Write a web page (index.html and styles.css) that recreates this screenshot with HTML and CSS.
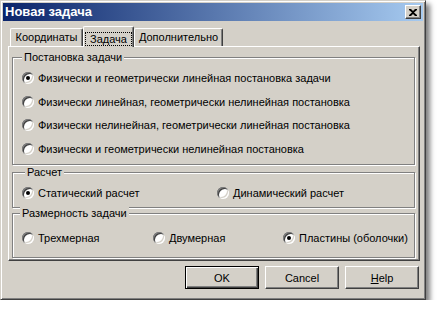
FILE: index.html
```html
<!DOCTYPE html>
<html lang="ru">
<head>
  <meta charset="UTF-8" />
  <title>Новая задача</title>
  <link rel="stylesheet" href="styles.css">
</head>
<body>
  <div class="dialog">
    <div class="titlebar">
      <span class="title">Новая задача</span>
      <button class="close-btn">
        <svg width="8" height="7" viewBox="0 0 8 7">
          <path d="M0 0h2l2 2 2-2h2v1L5 3.5 8 6v1H6L4 5 2 7H0V6l3-2.5L0 1z" fill="#000"/>
        </svg>
      </button>
    </div>

    <div class="client">
      <div class="tabs">
        <div class="tab tab-coords">Координаты</div>
        <div class="tab tab-task active"><span class="focus">Задача</span></div>
        <div class="tab tab-extra">Дополнительно</div>
      </div>

      <div class="panel">
        <div class="group group-setup">
          <div class="group-title">Постановка задачи</div>
          <div class="rows">
            <label class="radio checked"><i></i>Физически и геометрически линейная постановка задачи</label>
            <label class="radio"><i></i>Физически линейная, геометрически нелинейная постановка</label>
            <label class="radio"><i></i>Физически нелинейная, геометрически линейная постановка</label>
            <label class="radio"><i></i>Физически и геометрически нелинейная постановка</label>
          </div>
        </div>

        <div class="group group-calc">
          <div class="group-title">Расчет</div>
          <div class="cols cols-calc">
            <label class="radio checked"><i></i>Статический расчет</label>
            <label class="radio"><i></i>Динамический расчет</label>
          </div>
        </div>

        <div class="group group-dim">
          <div class="group-title">Размерность задачи</div>
          <div class="cols cols-dim">
            <label class="radio"><i></i>Трехмерная</label>
            <label class="radio"><i></i>Двумерная</label>
            <label class="radio checked"><i></i>Пластины (оболочки)</label>
          </div>
        </div>
      </div>

      <div class="buttons">
        <button class="btn default">OK</button>
        <button class="btn">Cancel</button>
        <button class="btn"><u>H</u>elp</button>
      </div>
    </div>
  </div>
</body>
</html>
```

FILE: styles.css
```css
* {
  box-sizing: border-box;
}

body {
  margin: 0;
  background: #fff;
  font-family: 'Liberation Sans', Arial, sans-serif;
  font-size: 11px;
  color: #000;
}

.dialog {
  width: 426px;
  height: 300px;
  padding: 2px;
  background: #d4d0c8;
  border: 1px solid;
  border-color: #d4d0c8 #404040 #404040 #d4d0c8;
  box-shadow: inset 1px 1px 0 #fff, inset -1px -1px 0 #808080, 4px 4px 5px rgba(0, 0, 0, 0.5);
}

.titlebar {
  height: 18px;
  display: flex;
  align-items: flex-start;
  justify-content: space-between;
  background: linear-gradient(to right, #0a246a, #a6caf0);
}

.title {
  color: #fff;
  font-weight: bold;
  font-size: 13px;
  line-height: 18px;
  padding-left: 2px;
}

.close-btn {
  width: 16px;
  height: 14px;
  margin: 2px 2px 0 0;
  padding: 0;
  display: flex;
  align-items: center;
  justify-content: center;
  background: #d4d0c8;
  border: 1px solid;
  border-color: #fff #404040 #404040 #fff;
  box-shadow: inset -1px -1px 0 #808080;
}

.client {
  padding: 5px 3px 0 5px;
}

/* вкладки */
.tabs {
  display: flex;
  align-items: flex-end;
  height: 20px;
  margin-left: 2px;
}

.tab {
  height: 18px;
  line-height: 16px;
  text-align: center;
  border: 1px solid;
  border-bottom: none;
  border-color: #fff #404040 #404040 #fff;
  border-radius: 2px 2px 0 0;
  box-shadow: inset -1px 0 0 #808080;
  background: #d4d0c8;
}

.tab-coords { width: 73px; }
.tab-task { width: 51px; }
.tab-extra { width: 89px; }

.tab.active {
  height: 21px;
  margin-bottom: -1px;
  position: relative;
  z-index: 1;
  padding-top: 4px;
}

.focus {
  display: inline-block;
  width: 47px;
  height: 14px;
  line-height: 12px;
  border: 1px dotted #000;
}

.panel {
  height: 215px;
  padding: 10px 4px 0 3px;
  border: 1px solid;
  border-color: #fff #404040 #404040 #fff;
  box-shadow: inset -1px -1px 0 #808080;
}

/* группы */
.group {
  border: 1px solid #808080;
  box-shadow: 1px 1px 0 #fff, inset 1px 1px 0 #fff;
  padding-left: 9px;
}

.group-title {
  width: fit-content;
  margin-top: -7px;
  padding: 0 2px;
  line-height: 13px;
  background: #d4d0c8;
}

.group-setup { height: 108px; }
.group-calc { height: 36px; margin-top: 7px; }
.group-dim { height: 45px; margin-top: 5px; }

.group-calc .group-title { margin-left: 3px; }
.group-dim .group-title { margin-left: -2px; }

.rows {
  display: flex;
  flex-direction: column;
  gap: 9.5px;
  margin-top: 7px;
}

.cols {
  display: grid;
  margin-top: 7px;
}

.cols-calc { grid-template-columns: 195px auto; }
.cols-dim { grid-template-columns: 131px 130px auto; margin-top: 11px; }

.radio {
  display: flex;
  align-items: center;
  gap: 4px;
  height: 14px;
  white-space: nowrap;
}

.radio i {
  width: 12px;
  height: 12px;
  border-radius: 50%;
  background: #fff;
  box-shadow: inset 1px 1px 0 #808080, inset -1px -1px 0 #fff, inset 2px 2px 0 #404040, inset -2px -2px 0 #d4d0c8;
  display: flex;
  align-items: center;
  justify-content: center;
  flex: none;
}

.radio.checked i::after {
  content: "";
  width: 4px;
  height: 4px;
  border-radius: 50%;
  background: #000;
}

/* кнопки */
.buttons {
  display: flex;
  justify-content: flex-end;
  gap: 6px;
  margin-top: 5px;
  padding-right: 1px;
}

.btn {
  width: 74px;
  height: 23px;
  padding: 0;
  font-family: inherit;
  font-size: 11px;
  color: #000;
  background: #d4d0c8;
  border: 1px solid;
  border-color: #fff #404040 #404040 #fff;
  box-shadow: inset -1px -1px 0 #808080;
}

.btn.default {
  border-color: #000;
  box-shadow: inset 1px 1px 0 #fff, inset -1px -1px 0 #404040, inset -2px -2px 0 #808080;
}
```
